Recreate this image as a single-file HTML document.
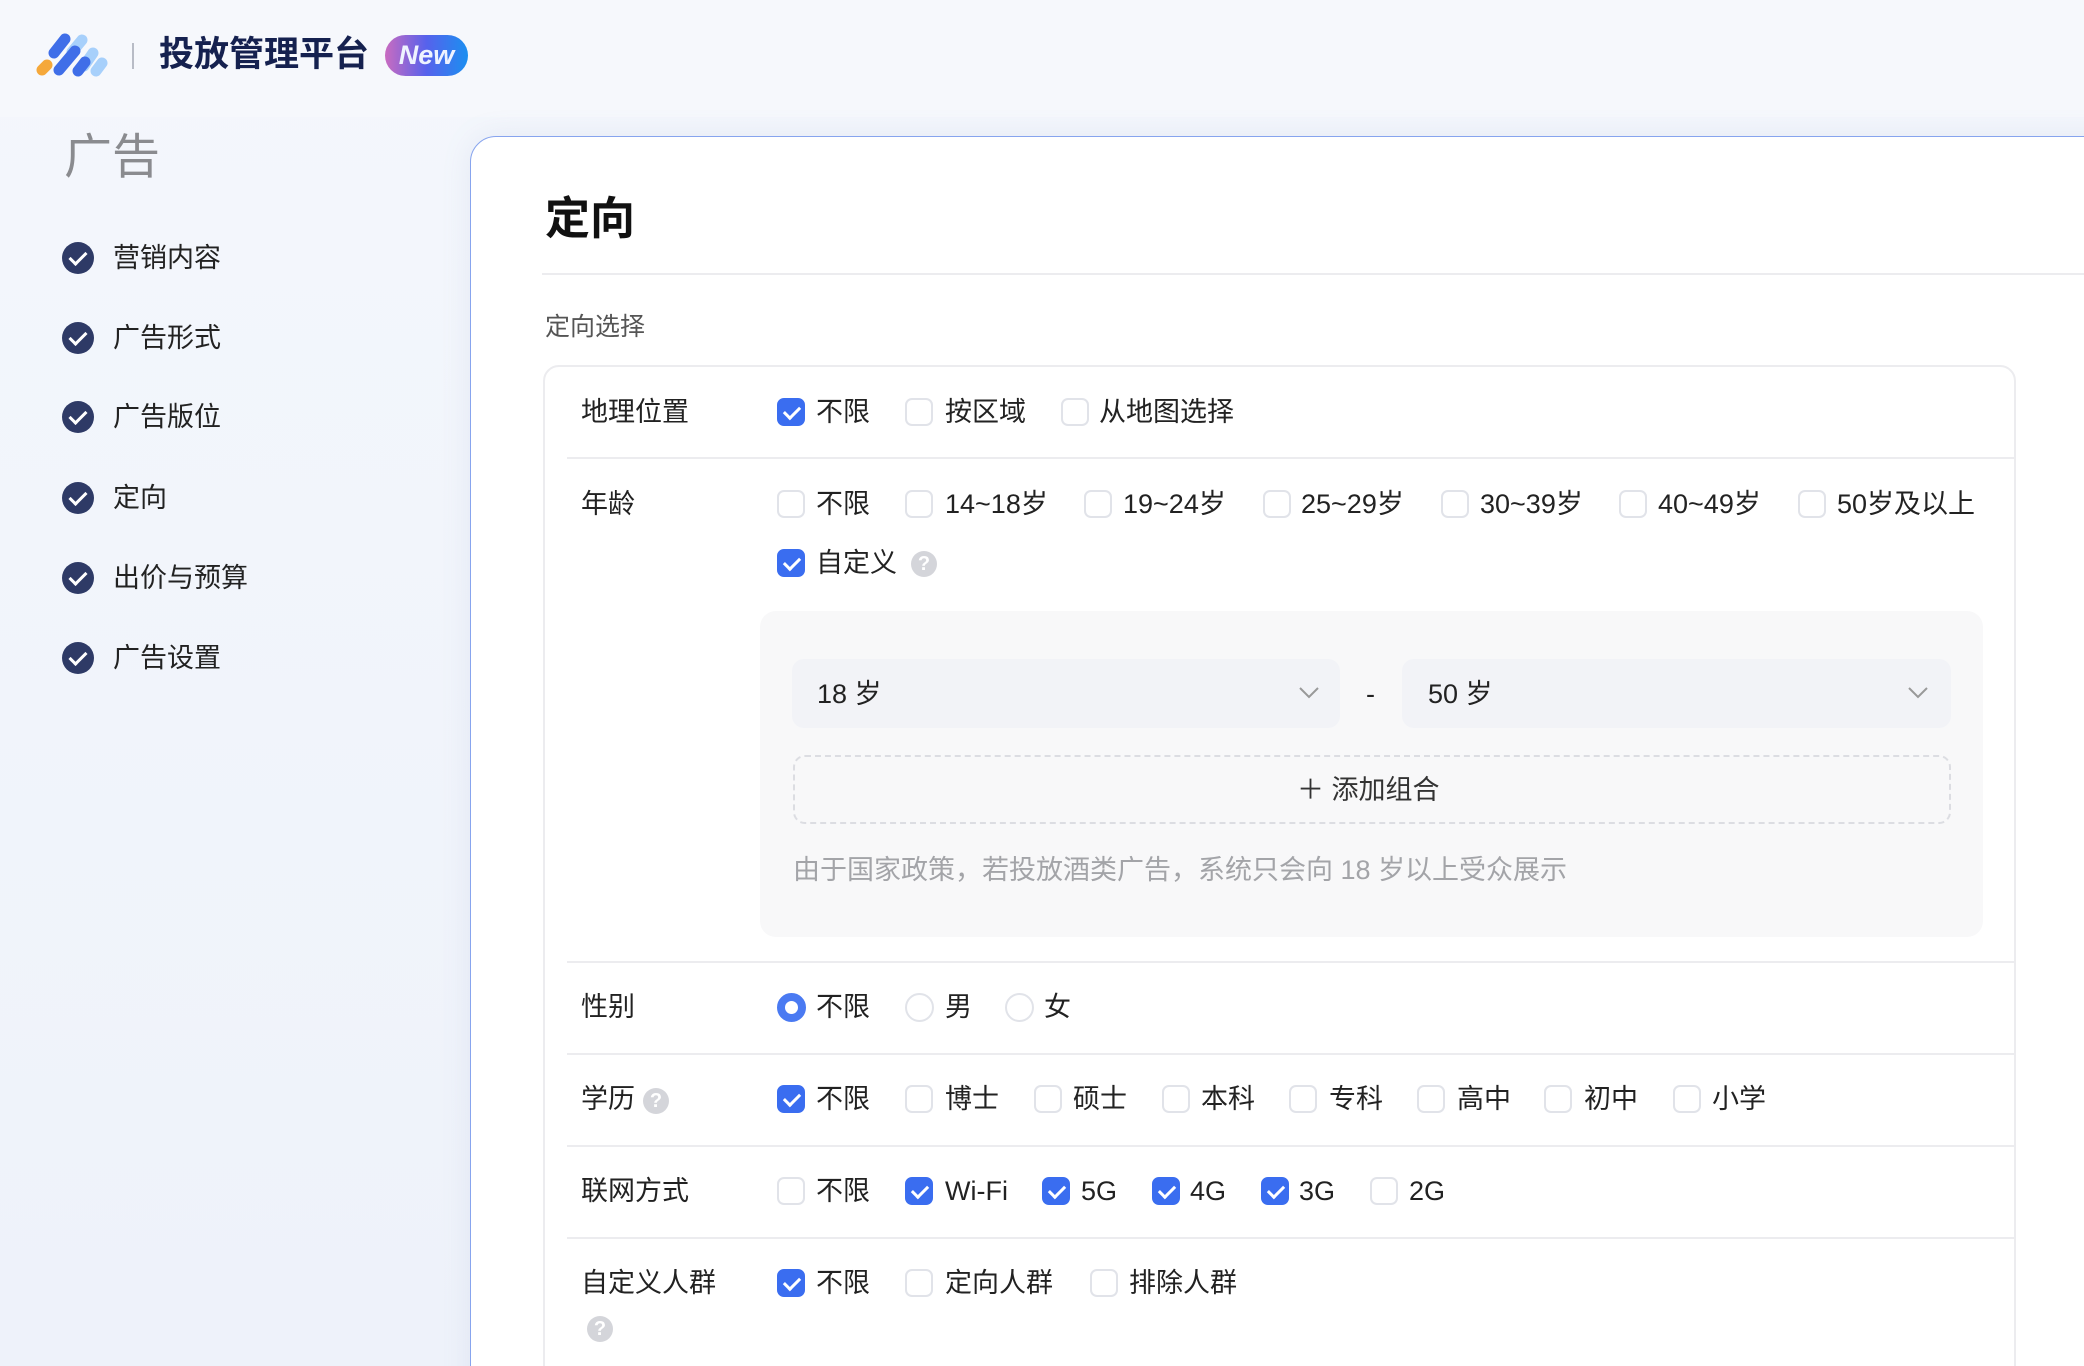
<!DOCTYPE html>
<html><head><meta charset="utf-8"><style>
*{margin:0;padding:0;box-sizing:border-box}
html,body{width:2084px;height:1366px;overflow:hidden}
body{background:linear-gradient(180deg,#f4f7fc,#eef2fa);font-family:"Liberation Sans","Noto Sans CJK SC",sans-serif;color:#222;position:relative}
#w{position:absolute;left:0;top:0;width:2084px;height:1366px;overflow:hidden}
.a{position:absolute;white-space:nowrap}
.hdr{position:absolute;left:0;top:0;width:2084px;height:117px;background:#f6f8fc}
.nav{font-size:27px;color:#222;line-height:1}
.ck{position:absolute;width:28px;height:28px;border:2px solid #e1e3e9;border-radius:7px;background:#fff}
.ck.on{background:#3a6df0;border-color:#3a6df0}
.ck.on:after{content:"";position:absolute;left:8px;top:3px;width:7px;height:13px;border:solid #fff;border-width:0 3px 3px 0;transform:rotate(45deg)}
.rd{position:absolute;width:29px;height:29px;border:2px solid #e1e3e9;border-radius:50%;background:#fff}
.rd.on{border:8px solid #4a7af2}
.t{position:absolute;font-size:27px;line-height:1;white-space:nowrap;color:#222}
.sep{position:absolute;left:567px;width:1449px;height:2px;background:#ececef}
.q{position:absolute;width:26px;height:26px;border-radius:50%;background:#d4d5da;color:#fff;font-size:20px;font-weight:bold;text-align:center;line-height:26px}
.dot{position:absolute;width:32px;height:32px;border-radius:50%;background:#2e3a66}
.dot:after{content:"";position:absolute;left:11px;top:6px;width:7px;height:14px;border:solid #fff;border-width:0 3px 3px 0;transform:rotate(45deg)}
</style></head><body><div id="w">
<div class="hdr"></div>
<svg class="a" style="left:0;top:0" width="120" height="90" viewBox="0 0 120 90">
<g stroke-linecap="round" stroke-width="11" fill="none">
<line x1="42" y1="70" x2="47" y2="65" stroke="#f5a83a"/>
<line x1="72" y1="52" x2="82" y2="40" stroke="#a7d0fb"/>
<line x1="84" y1="66" x2="93" y2="53" stroke="#a7d0fb"/>
<line x1="54" y1="53" x2="65" y2="39" stroke="#3f6ee8"/>
<line x1="59" y1="70" x2="75" y2="51" stroke="#3f6ee8"/>
<line x1="78" y1="71" x2="85" y2="62" stroke="#3f6ee8"/>
<line x1="96" y1="71" x2="102" y2="63" stroke="#a7d0fb"/>
</g></svg>
<div class="a" style="left:132px;top:43px;width:2px;height:26px;background:#b8bcc6"></div>
<div class="a" style="left:159px;top:37px;font-size:35px;font-weight:bold;color:#15214f;line-height:1">投放管理平台</div>
<div class="a" style="left:385px;top:35px;width:83px;height:41px;border-radius:21px;background:linear-gradient(90deg,#c96bc0,#5662ec 50%,#1b8ff0);color:#eef3ff;font-size:27px;font-weight:bold;font-style:italic;text-align:center;line-height:41px">New</div>

<div class="a" style="left:64px;top:134px;font-size:48px;color:#8a8b8f;line-height:1">广告</div>
<div class="dot" style="left:62px;top:242px"></div><div class="a nav" style="left:113px;top:245px">营销内容</div>
<div class="dot" style="left:62px;top:322px"></div><div class="a nav" style="left:113px;top:325px">广告形式</div>
<div class="dot" style="left:62px;top:401px"></div><div class="a nav" style="left:113px;top:404px">广告版位</div>
<div class="dot" style="left:62px;top:482px"></div><div class="a nav" style="left:113px;top:485px">定向</div>
<div class="dot" style="left:62px;top:562px"></div><div class="a nav" style="left:113px;top:565px">出价与预算</div>
<div class="dot" style="left:62px;top:642px"></div><div class="a nav" style="left:113px;top:645px">广告设置</div>

<div class="a" style="left:470px;top:136px;width:1700px;height:1300px;background:#fff;border:1.5px solid #87a4ee;border-radius:26px;box-shadow:0 0 30px rgba(120,140,190,.12)"></div>
<div class="a" style="left:545px;top:196px;font-size:45px;font-weight:bold;color:#111;line-height:1">定向</div>
<div class="a" style="left:542px;top:273px;width:1542px;height:2px;background:#ececef"></div>
<div class="a" style="left:545px;top:315px;font-size:25px;color:#555;line-height:1">定向选择</div>
<div class="a" style="left:543px;top:365px;width:1473px;height:1100px;border:2px solid #ececef;border-radius:16px"></div>

<div class="t" style="left:581px;top:399px">地理位置</div>
<div class="ck on" style="left:777px;top:398px"></div><div class="t" style="left:816px;top:399px">不限</div>
<div class="ck" style="left:905px;top:398px"></div><div class="t" style="left:945px;top:399px">按区域</div>
<div class="ck" style="left:1061px;top:398px"></div><div class="t" style="left:1099px;top:399px">从地图选择</div>
<div class="sep" style="top:457px"></div>

<div class="t" style="left:581px;top:491px">年龄</div>
<div class="ck" style="left:777px;top:490px"></div><div class="t" style="left:816px;top:491px">不限</div>
<div class="ck" style="left:905px;top:490px"></div><div class="t" style="left:945px;top:491px">14~18岁</div>
<div class="ck" style="left:1084px;top:490px"></div><div class="t" style="left:1123px;top:491px">19~24岁</div>
<div class="ck" style="left:1263px;top:490px"></div><div class="t" style="left:1301px;top:491px">25~29岁</div>
<div class="ck" style="left:1441px;top:490px"></div><div class="t" style="left:1480px;top:491px">30~39岁</div>
<div class="ck" style="left:1619px;top:490px"></div><div class="t" style="left:1658px;top:491px">40~49岁</div>
<div class="ck" style="left:1798px;top:490px"></div><div class="t" style="left:1837px;top:491px">50岁及以上</div>
<div class="ck on" style="left:777px;top:549px"></div><div class="t" style="left:816px;top:550px">自定义</div>
<div class="q" style="left:911px;top:551px">?</div>

<div class="a" style="left:760px;top:611px;width:1223px;height:326px;background:#f8f8f9;border-radius:16px"></div>
<div class="a" style="left:792px;top:659px;width:548px;height:69px;background:#f2f3f7;border-radius:12px"></div>
<div class="t" style="left:817px;top:681px">18 岁</div>
<svg class="a" style="left:1298px;top:686px" width="22" height="14"><path d="M2 2 L11 11 L20 2" stroke="#999" stroke-width="2" fill="none"/></svg>
<div class="t" style="left:1366px;top:681px">-</div>
<div class="a" style="left:1402px;top:659px;width:549px;height:69px;background:#f2f3f7;border-radius:12px"></div>
<div class="t" style="left:1428px;top:681px">50 岁</div>
<svg class="a" style="left:1907px;top:686px" width="22" height="14"><path d="M2 2 L11 11 L20 2" stroke="#999" stroke-width="2" fill="none"/></svg>
<div class="a" style="left:793px;top:755px;width:1158px;height:69px;border:2px dashed #dcdde2;border-radius:12px"></div>
<div class="t" style="left:1297px;top:777px;color:#333">＋ 添加组合</div>
<div class="t" style="left:793px;top:857px;font-size:27px;color:#a3a4a8">由于国家政策，若投放酒类广告，系统只会向 18 岁以上受众展示</div>
<div class="sep" style="top:961px"></div>

<div class="t" style="left:581px;top:994px">性别</div>
<div class="rd on" style="left:777px;top:993px"></div><div class="t" style="left:816px;top:994px">不限</div>
<div class="rd" style="left:905px;top:993px"></div><div class="t" style="left:945px;top:994px">男</div>
<div class="rd" style="left:1005px;top:993px"></div><div class="t" style="left:1044px;top:994px">女</div>
<div class="sep" style="top:1053px"></div>

<div class="t" style="left:581px;top:1086px">学历</div>
<div class="q" style="left:643px;top:1088px">?</div>
<div class="ck on" style="left:777px;top:1085px"></div><div class="t" style="left:816px;top:1086px">不限</div>
<div class="ck" style="left:905px;top:1085px"></div><div class="t" style="left:945px;top:1086px">博士</div>
<div class="ck" style="left:1034px;top:1085px"></div><div class="t" style="left:1073px;top:1086px">硕士</div>
<div class="ck" style="left:1162px;top:1085px"></div><div class="t" style="left:1201px;top:1086px">本科</div>
<div class="ck" style="left:1289px;top:1085px"></div><div class="t" style="left:1329px;top:1086px">专科</div>
<div class="ck" style="left:1417px;top:1085px"></div><div class="t" style="left:1457px;top:1086px">高中</div>
<div class="ck" style="left:1544px;top:1085px"></div><div class="t" style="left:1584px;top:1086px">初中</div>
<div class="ck" style="left:1673px;top:1085px"></div><div class="t" style="left:1712px;top:1086px">小学</div>
<div class="sep" style="top:1145px"></div>

<div class="t" style="left:581px;top:1178px">联网方式</div>
<div class="ck" style="left:777px;top:1177px"></div><div class="t" style="left:816px;top:1178px">不限</div>
<div class="ck on" style="left:905px;top:1177px"></div><div class="t" style="left:945px;top:1178px">Wi-Fi</div>
<div class="ck on" style="left:1042px;top:1177px"></div><div class="t" style="left:1081px;top:1178px">5G</div>
<div class="ck on" style="left:1152px;top:1177px"></div><div class="t" style="left:1190px;top:1178px">4G</div>
<div class="ck on" style="left:1261px;top:1177px"></div><div class="t" style="left:1299px;top:1178px">3G</div>
<div class="ck" style="left:1370px;top:1177px"></div><div class="t" style="left:1409px;top:1178px">2G</div>
<div class="sep" style="top:1237px"></div>

<div class="t" style="left:581px;top:1270px">自定义人群</div>
<div class="q" style="left:587px;top:1316px">?</div>
<div class="ck on" style="left:777px;top:1269px"></div><div class="t" style="left:816px;top:1270px">不限</div>
<div class="ck" style="left:905px;top:1269px"></div><div class="t" style="left:945px;top:1270px">定向人群</div>
<div class="ck" style="left:1090px;top:1269px"></div><div class="t" style="left:1129px;top:1270px">排除人群</div>
</div></body></html>
